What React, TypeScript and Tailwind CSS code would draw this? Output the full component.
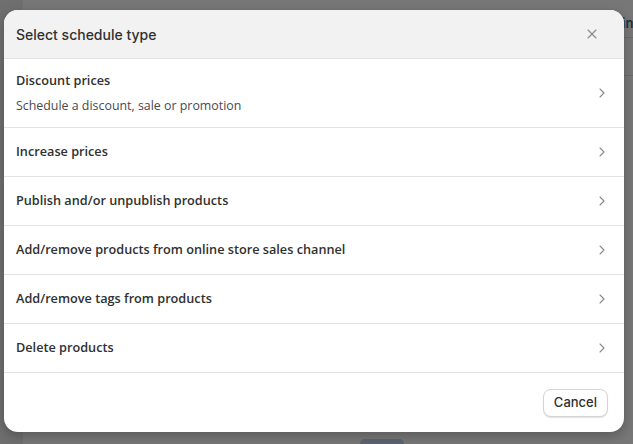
import { ChevronRight, X } from 'lucide-react';

const OPTIONS = [
  { title: 'Discount prices', sub: 'Schedule a discount, sale or promotion' },
  { title: 'Increase prices' },
  { title: 'Publish and/or unpublish products' },
  { title: 'Add/remove products from online store sales channel' },
  { title: 'Add/remove tags from products' },
  { title: 'Delete products' },
];

export default function App() {
  return (
    <div className="relative h-[444px] w-[633px] overflow-hidden bg-[#777777]" style={{ fontFamily: '"Open Sans", "Noto Sans", sans-serif' }}>
      {/* dimmed page behind the modal */}
      <div className="absolute left-0 top-0 h-full w-[23px] bg-[#6f6f6f]" />
      <div className="absolute right-0 top-[37px] h-px w-[20px] bg-[#6a6a6a]" />
      <div className="absolute right-0 top-[75px] h-px w-[20px] bg-[#6a6a6a]" />
      <div className="absolute left-[622px] top-[14px] text-[13px] font-semibold text-[#22303c]" style={{ fontFamily: 'Inter, sans-serif' }}>in</div>
      <div className="absolute left-[360px] top-[439px] h-[10px] w-[44px] rounded-md bg-[#5c6470]" />

      <div className="relative pl-[4px] pt-[10px]">
        <div className="w-[620px] overflow-hidden rounded-[14px] bg-white shadow-[0_4px_12px_rgba(0,0,0,0.25)]">
          <div className="flex h-[49px] items-center justify-between border-b border-[#e3e3e3] bg-[#f2f2f2] pl-[12px] pr-[24px]">
            <span className="text-[14px] font-medium text-[#303030]" style={{ fontFamily: 'Inter, sans-serif' }}>Select schedule type</span>
            <X className="h-[16px] w-[16px] text-[#8a8a8a]" strokeWidth={1.6} />
          </div>
          {OPTIONS.map((o) => (
            <div key={o.title} className={`flex items-center justify-between border-b border-[#e3e3e3] pl-[12px] pr-[14px] ${o.sub ? 'h-[69px]' : 'h-[49px]'}`}>
              <div className={o.sub ? '' : 'pb-[3px]'}>
                <div className="text-[12.7px] font-semibold leading-[18px] text-[#303030]">{o.title}</div>
                {o.sub && <div className="mt-[8px] text-[12.4px] leading-[18px] text-[#4a4a4a]">{o.sub}</div>}
              </div>
              <ChevronRight className="h-[16px] w-[16px] text-[#8a8a8a]" strokeWidth={1.6} />
            </div>
          ))}
          <div className="flex h-[59px] items-center justify-end pr-[16px]">
            <button className="h-[28px] rounded-[8px] border border-[#d4d4d4] bg-white px-[10px] text-[13px] font-medium text-[#303030] shadow-[0_1px_1px_rgba(0,0,0,0.12)]" style={{ fontFamily: 'Inter, sans-serif' }}>
              Cancel
            </button>
          </div>
        </div>
      </div>
    </div>
  );
}
